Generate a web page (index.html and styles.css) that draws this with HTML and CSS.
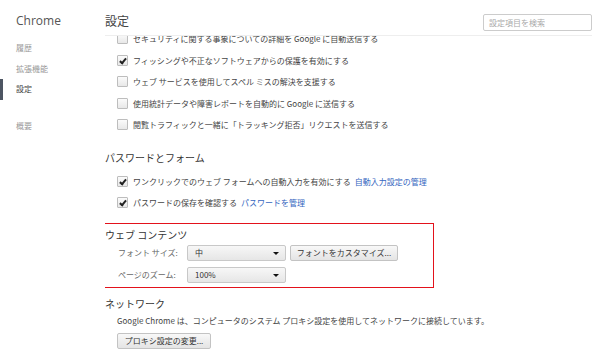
FILE: index.html
```html
<!DOCTYPE html>
<html>
<head>
    <title>設定</title>
    <link rel="stylesheet" href="styles.css">
</head>
<body>
    <div class="page">
        <div class="sidebar">
            <div class="brand">Chrome</div>
            <ul class="nav">
                <li>履歴</li>
                <li>拡張機能</li>
                <li class="active">設定</li>
                <li class="gap">概要</li>
            </ul>
        </div>
        <div class="main">
            <div class="header">
                <h1>設定</h1>
                <div class="search">設定項目を検索</div>
            </div>
            <div class="content">
                <div class="section first">
                    <div class="row"><span class="cb"></span>セキュリティに関する事象についての詳細を Google に自動送信する</div>
                    <div class="row"><span class="cb on"></span>フィッシングや不正なソフトウェアからの保護を有効にする</div>
                    <div class="row"><span class="cb"></span>ウェブ サービスを使用してスペル ミスの解決を支援する</div>
                    <div class="row"><span class="cb"></span>使用統計データや障害レポートを自動的に Google に送信する</div>
                    <div class="row"><span class="cb"></span>閲覧トラフィックと一緒に「トラッキング拒否」リクエストを送信する</div>
                </div>

                <div class="section">
                    <h2>パスワードとフォーム</h2>
                    <div class="row"><span class="cb on"></span>ワンクリックでのウェブ フォームへの自動入力を有効にする <a class="link">自動入力設定の管理</a></div>
                    <div class="row"><span class="cb on"></span>パスワードの保存を確認する <a class="link">パスワードを管理</a></div>
                </div>

                <div class="section boxed">
                    <h2>ウェブ コンテンツ</h2>
                    <div class="field">
                        <span class="label">フォント サイズ:</span>
                        <div class="select">中<span class="arrow"></span></div>
                        <div class="btn wide">フォントをカスタマイズ...</div>
                    </div>
                    <div class="field">
                        <span class="label">ページのズーム:</span>
                        <div class="select">100%<span class="arrow"></span></div>
                    </div>
                </div>

                <div class="section net">
                    <h2>ネットワーク</h2>
                    <p class="desc">Google Chrome は、コンピュータのシステム プロキシ設定を使用してネットワークに接続しています。</p>
                    <div class="btn proxy">プロキシ設定の変更...</div>
                </div>
            </div>
        </div>
    </div>
</body>
</html>
```

FILE: styles.css
```css
body {
    margin: 0;
    background-color: #fff;
    font-family: "Noto Sans CJK JP", "Noto Sans", sans-serif;
    font-size: 8px;
    color: #444;
}

.page {
    display: flex;
    height: 360px;
    overflow: hidden;
}

.sidebar {
    width: 105px;
    flex-shrink: 0;
}

.brand {
    font-family: "Open Sans", "Noto Sans", sans-serif;
    font-size: 12px;
    color: #555;
    padding: 12px 0 0 16px;
    line-height: 17px;
}

.nav {
    list-style: none;
    margin: 9px 0 0;
    padding: 0;
}

.nav li {
    color: #999;
    line-height: 20.5px;
    padding-left: 16px;
}

.nav li.active {
    color: #444;
    box-shadow: inset 3px 0 0 #4d5562;
}

.nav li.gap {
    margin-top: 16px;
}

.main {
    flex: 1;
    padding-right: 8px;
    display: flex;
    flex-direction: column;
}

.header {
    height: 35px;
    border-bottom: 1px solid #eee;
    display: flex;
    align-items: center;
    justify-content: space-between;
    flex-shrink: 0;
    position: relative;
    z-index: 1;
    background: #fff;
}

h1 {
    margin: 5px 0 0;
    font-size: 12px;
    font-weight: normal;
    color: #444;
}

.search {
    width: 102px;
    height: 15px;
    margin-top: 10px;
    border: 1px solid #ccc;
    border-radius: 2px;
    color: #aaa;
    line-height: 15px;
    padding-left: 5px;
}

.content {
    overflow: hidden;
}

.section {
    margin-top: 15px;
}

.section.first {
    margin-top: -8px;
}

h2 {
    margin: 0;
    font-size: 10px;
    font-weight: normal;
    line-height: 14px;
    color: #333;
}

h2 + .row {
    margin-top: 6px;
}

.row {
    height: 21.5px;
    display: flex;
    align-items: center;
    padding-left: 12px;
    color: #444;
    white-space: nowrap;
}

.cb {
    width: 9px;
    height: 9px;
    border: 1px solid #bdbdbd;
    border-radius: 1px;
    background: linear-gradient(#fbfbfb, #e8e8e8);
    margin-right: 5px;
    position: relative;
    flex-shrink: 0;
}

.cb.on::after {
    content: "";
    position: absolute;
    left: 3px;
    top: 1px;
    width: 2px;
    height: 5px;
    border: solid #222;
    border-width: 0 2px 2px 0;
    transform: rotate(40deg);
}

.link {
    color: #3466c0;
    margin-left: 4px;
}

.boxed {
    margin: 9px 0 0 -8px;
    width: 328px;
    border: 1px solid #e3121b;
    padding: 4px 0 1px 7px;
}

.field {
    display: flex;
    align-items: center;
    height: 22px;
    padding-left: 13px;
}

.label {
    width: 69px;
    color: #666;
}

.select {
    width: 90px;
    height: 14px;
    border: 1px solid #c8c8c8;
    border-radius: 2px;
    background: linear-gradient(#f7f7f7, #e6e6e6);
    line-height: 14px;
    padding-left: 7px;
    position: relative;
    color: #333;
}

.arrow {
    position: absolute;
    right: 6px;
    top: 6px;
    border-left: 3px solid transparent;
    border-right: 3px solid transparent;
    border-top: 3px solid #111;
}

.btn {
    height: 14px;
    border: 1px solid #c3c3c3;
    border-radius: 2px;
    background: linear-gradient(#f8f8f8, #e4e4e4);
    line-height: 14px;
    text-align: center;
    color: #333;
}

.btn.wide {
    width: 106px;
    margin-left: 4px;
}

.net {
    margin-top: 9px;
}

.desc {
    margin: 3px 0 0 12px;
    line-height: 14px;
}

.btn.proxy {
    width: 92px;
    margin: 5px 0 0 12px;
}
```
